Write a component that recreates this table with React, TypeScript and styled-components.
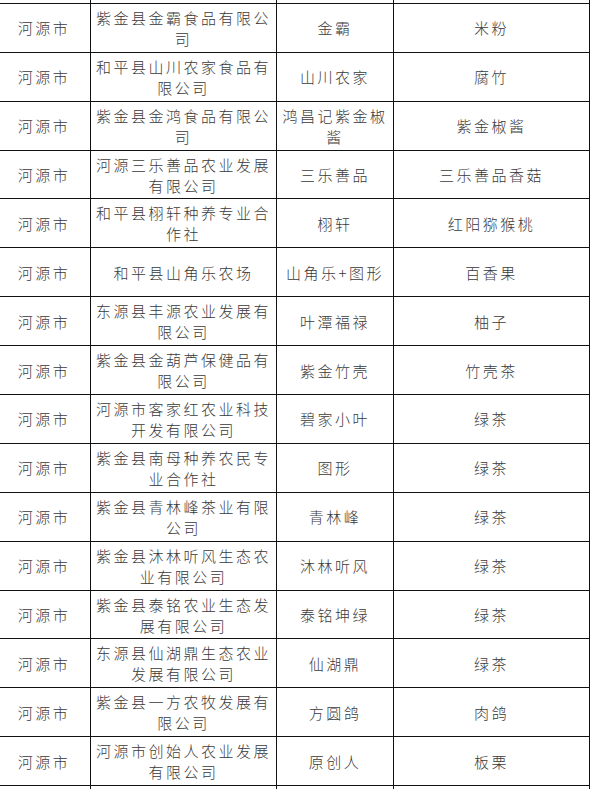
import styled, { createGlobalStyle } from "styled-components";

const GlobalStyle = createGlobalStyle`
  html, body {
    margin: 0;
    padding: 0;
    background: #ffffff;
    overflow: hidden;
  }
`;

const Page = styled.div`
  width: 592px;
  height: 789px;
  overflow: hidden;
  background: #ffffff;
`;

const Table = styled.table`
  border-collapse: collapse;
  table-layout: fixed;
  width: 592px;
  margin: -46px 0 0 -3px;
  font-family: "Noto Sans CJK SC", "Noto Sans", sans-serif;
  font-weight: 300;
  font-size: 15px;
  letter-spacing: 2.5px;
  line-height: 21px;
  color: #3a3a3a;
`;

const Row = styled.tr`
  height: 48.9px;
`;

const Cell = styled.td`
  border: 1px solid #111;
  padding: 0 5px;
  text-align: center;
  vertical-align: middle;
  word-break: break-all;
`;

interface Product {
  company: string;
  brand: string;
  item: string;
}

const products: Product[] = [
  { company: "紫金县金霸食品有限公司", brand: "金霸", item: "米粉" },
  { company: "和平县山川农家食品有限公司", brand: "山川农家", item: "腐竹" },
  { company: "紫金县金鸿食品有限公司", brand: "鸿昌记紫金椒酱", item: "紫金椒酱" },
  { company: "河源三乐善品农业发展有限公司", brand: "三乐善品", item: "三乐善品香菇" },
  { company: "和平县栩轩种养专业合作社", brand: "栩轩", item: "红阳猕猴桃" },
  { company: "和平县山角乐农场", brand: "山角乐+图形", item: "百香果" },
  { company: "东源县丰源农业发展有限公司", brand: "叶潭福禄", item: "柚子" },
  { company: "紫金县金葫芦保健品有限公司", brand: "紫金竹壳", item: "竹壳茶" },
  { company: "河源市客家红农业科技开发有限公司", brand: "碧家小叶", item: "绿茶" },
  { company: "紫金县南母种养农民专业合作社", brand: "图形", item: "绿茶" },
  { company: "紫金县青林峰茶业有限公司", brand: "青林峰", item: "绿茶" },
  { company: "紫金县沐林听风生态农业有限公司", brand: "沐林听风", item: "绿茶" },
  { company: "紫金县泰铭农业生态发展有限公司", brand: "泰铭坤绿", item: "绿茶" },
  { company: "东源县仙湖鼎生态农业发展有限公司", brand: "仙湖鼎", item: "绿茶" },
  { company: "紫金县一方农牧发展有限公司", brand: "方圆鸽", item: "肉鸽" },
  { company: "河源市创始人农业发展有限公司", brand: "原创人", item: "板栗" },
];

const App = (): JSX.Element => {
  return (
    <Page>
      <GlobalStyle />
      <Table>
        <colgroup>
          <col style={{ width: 93 }} />
          <col style={{ width: 186 }} />
          <col style={{ width: 117 }} />
          <col style={{ width: 196 }} />
        </colgroup>
        <tbody>
          {/* row cut off at the top edge */}
          <Row>
            <Cell />
            <Cell />
            <Cell />
            <Cell />
          </Row>
          {products.map((p, index) => (
            <Row key={index}>
              <Cell>河源市</Cell>
              <Cell>{p.company}</Cell>
              <Cell>{p.brand}</Cell>
              <Cell>{p.item}</Cell>
            </Row>
          ))}
          <Row>
            <Cell />
            <Cell />
            <Cell />
            <Cell />
          </Row>
        </tbody>
      </Table>
    </Page>
  );
};

export default App;
